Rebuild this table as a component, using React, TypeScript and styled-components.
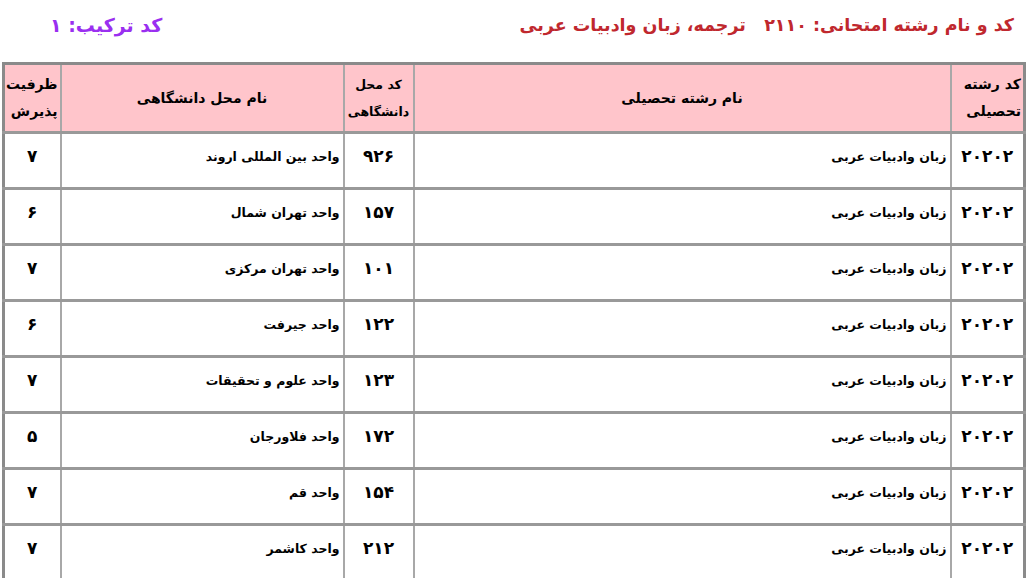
import styled, { createGlobalStyle } from "styled-components";

const GlobalStyle = createGlobalStyle`
	html, body {
		margin: 0;
		padding: 0;
		background: #fff;
	}
	body {
		font-family: "DejaVu Sans", "Noto Sans", sans-serif;
		color: #000;
	}
`;

const toFa = (n: number | string) =>
	String(n).replace(/[0-9]/g, (d) => "۰۱۲۳۴۵۶۷۸۹"[Number(d)]);

const rows = [
	{ field: 20202, fieldName: "زبان وادبیات عربی", code: 926, place: "واحد بین المللی اروند", cap: 7 },
	{ field: 20202, fieldName: "زبان وادبیات عربی", code: 157, place: "واحد تهران شمال", cap: 6 },
	{ field: 20202, fieldName: "زبان وادبیات عربی", code: 101, place: "واحد تهران مرکزی", cap: 7 },
	{ field: 20202, fieldName: "زبان وادبیات عربی", code: 122, place: "واحد جیرفت", cap: 6 },
	{ field: 20202, fieldName: "زبان وادبیات عربی", code: 123, place: "واحد علوم و تحقیقات", cap: 7 },
	{ field: 20202, fieldName: "زبان وادبیات عربی", code: 172, place: "واحد فلاورجان", cap: 5 },
	{ field: 20202, fieldName: "زبان وادبیات عربی", code: 154, place: "واحد قم", cap: 7 },
	{ field: 20202, fieldName: "زبان وادبیات عربی", code: 212, place: "واحد کاشمر", cap: 7 },
];

export default function App() {
	return (
		<Page>
			<GlobalStyle />
			<TitleBar>
				<MainTitle>
					کد و نام رشته امتحانی: {toFa(2110)}&nbsp;&nbsp; ترجمه، زبان وادبیات عربی
				</MainTitle>
				<ComboTitle>کد ترکیب: {toFa(1)}</ComboTitle>
			</TitleBar>
			<Table>
				<colgroup>
					<col style={{ width: 74 }} />
					<col style={{ width: 537 }} />
					<col style={{ width: 70 }} />
					<col style={{ width: 283 }} />
					<col style={{ width: 57 }} />
				</colgroup>
				<thead>
					<tr>
						<HeadCell align="right">کد رشته تحصیلی</HeadCell>
						<HeadCell>نام رشته تحصیلی</HeadCell>
						<HeadCell compact>کد محل دانشگاهی</HeadCell>
						<HeadCell>نام محل دانشگاهی</HeadCell>
						<HeadCell align="right">ظرفیت پذیرش</HeadCell>
					</tr>
				</thead>
				<tbody>
					{rows.map((r, i) => (
						<tr key={i}>
							<NumCell>{toFa(r.field)}</NumCell>
							<TextCell>{r.fieldName}</TextCell>
							<NumCell>{toFa(r.code)}</NumCell>
							<TextCell>{r.place}</TextCell>
							<NumCell>{toFa(r.cap)}</NumCell>
						</tr>
					))}
				</tbody>
			</Table>
		</Page>
	);
}

const Page = styled.div`
	direction: rtl;
	width: 1028px;
	padding: 0 2px 0 5px;
	box-sizing: border-box;
`;

const TitleBar = styled.div`
	display: flex;
	justify-content: space-between;
	align-items: center;
	height: 62px;
	padding: 0 12px 12px 45px;
	box-sizing: border-box;
`;

const MainTitle = styled.div`
	font-size: 17.5px;
	font-weight: 700;
	color: #c0282e;
	white-space: nowrap;
`;

const ComboTitle = styled.div`
	font-size: 19px;
	font-weight: 700;
	color: #9a2ff0;
	white-space: nowrap;
`;

const Table = styled.table`
	width: 1021px;
	table-layout: fixed;
	border-collapse: collapse;
	border: 3px solid #8a8a8a;
`;

const HeadCell = styled.th<{ align?: "right" | "center"; compact?: boolean }>`
	height: 66px;
	padding: ${({ compact }) => (compact ? "0" : "0 2px")};
	background: #ffc5cb;
	font-size: ${({ compact }) => (compact ? "12.5px" : "14px")};
	font-weight: 700;
	line-height: 27px;
	text-align: ${({ align }) => align || "center"};
	vertical-align: middle;
	border-top: 3px solid #8a8a8a;
	border-bottom: 3px solid #999;
	border-left: 2px solid #a8a8a8;
	border-right: 2px solid #a8a8a8;
`;

const BodyCell = styled.td`
	height: 56px;
	padding: 12px 3px 0;
	box-sizing: border-box;
	vertical-align: top;
	font-weight: 700;
	border-top: 3px solid #999;
	border-bottom: 3px solid #999;
	border-left: 2px solid #a8a8a8;
	border-right: 2px solid #a8a8a8;
	white-space: nowrap;
`;

const NumCell = styled(BodyCell)`
	text-align: center;
	font-size: 17px;
	letter-spacing: 2px;
`;

const TextCell = styled(BodyCell)`
	text-align: right;
	font-size: 12.5px;
	padding-top: 15px;
`;
